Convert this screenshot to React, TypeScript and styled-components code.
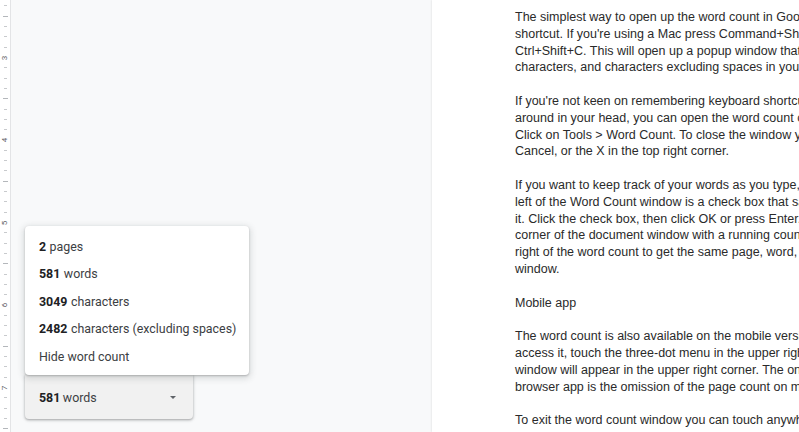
import React from "react";
import styled, { createGlobalStyle } from "styled-components";

const GlobalStyle = createGlobalStyle`
  html, body {
    margin: 0;
    padding: 0;
    width: 799px;
    height: 432px;
    overflow: hidden;
    background: #f8f9fa;
  }
`;

const EIGHTH = 10.3125;

const Shell = styled.div`
  display: flex;
  width: 799px;
  height: 432px;
  overflow: hidden;
`;

const Ruler = styled.div`
  flex: 0 0 10px;
  background: #ffffff;
  border-right: 1px solid #e3e4e6;
  display: flex;
  flex-direction: column;
  padding-top: 0.8px;
  overflow: hidden;
`;

const RulerCell = styled.div`
  flex: 0 0 ${EIGHTH}px;
  display: flex;
  align-items: center;
  justify-content: center;
`;

const Tick = styled.span<{ $long?: boolean }>`
  display: block;
  width: ${(p) => (p.$long ? 5 : 3)}px;
  height: 1px;
  background: ${(p) => (p.$long ? "#b4b7bb" : "#c8cacd")};
`;

const InchLabel = styled.span`
  font-family: Roboto, "Liberation Sans", sans-serif;
  font-size: 8px;
  line-height: 8px;
  color: #5f6368;
  transform: rotate(-90deg);
`;

const Canvas = styled.div`
  flex: 1;
  display: flex;
  background: #f8f9fa;
  overflow: hidden;
`;

const LeftPane = styled.div`
  flex: 0 0 421px;
  display: flex;
  flex-direction: column;
  justify-content: flex-end;
  align-items: flex-start;
  padding: 0 0 13px 14px;
  box-sizing: border-box;
`;

const Popup = styled.div`
  position: relative;
  z-index: 1;
  width: 224px;
  padding: 7px 0 5px;
  background: #ffffff;
  border-radius: 4px;
  box-shadow: 0 1px 2px rgba(60, 64, 67, 0.3), 0 2px 6px 2px rgba(60, 64, 67, 0.15);
`;

const PopupItem = styled.div`
  height: 27.5px;
  display: flex;
  align-items: center;
  padding-left: 14px;
  font-family: Roboto, "Liberation Sans", sans-serif;
  font-size: 12.4px;
  color: #3c4043;
  white-space: nowrap;

  b {
    font-weight: 700;
    color: #202124;
    margin-right: 3.5px;
  }
`;

const CountButton = styled.div`
  width: 168px;
  height: 44px;
  box-sizing: border-box;
  display: flex;
  align-items: center;
  justify-content: space-between;
  padding: 0 17px 0 14px;
  background: #f1f1f1;
  border-radius: 0 0 4px 4px;
  box-shadow: 0 1px 2px rgba(60, 64, 67, 0.3), 0 1px 3px 1px rgba(60, 64, 67, 0.15);
  font-family: Roboto, "Liberation Sans", sans-serif;
  font-size: 12.4px;
  color: #3c4043;

  b {
    font-weight: 700;
    color: #202124;
    margin-right: 2.5px;
  }
`;

const Caret = styled.span`
  width: 0;
  height: 0;
  border-left: 3.5px solid transparent;
  border-right: 3.5px solid transparent;
  border-top: 3.5px solid #5f6368;
`;

const Page = styled.div`
  flex: 0 0 701px;
  background: #ffffff;
  box-shadow: 0 0 2px rgba(60, 64, 67, 0.18);
  padding: 9px 0 0 83px;
  box-sizing: border-box;
  font-family: "Liberation Sans", Arial, sans-serif;
  font-size: 12.5px;
  line-height: 16.8px;
  color: #2a2a2a;
`;

const Paragraph = styled.div`
  margin-bottom: 16.8px;
`;

const Line = styled.div`
  white-space: nowrap;
`;

const paragraphs: string[][] = [
  [
    "The simplest way to open up the word count in Google Docs is with a keyboard",
    "shortcut. If you're using a Mac press Command+Shift+C. On Windows press",
    "Ctrl+Shift+C. This will open up a popup window that shows the number of pages, words,",
    "characters, and characters excluding spaces in your document.",
  ],
  [
    "If you're not keen on remembering keyboard shortcuts or just don't want to keep",
    "around in your head, you can open the word count counter from the menu bar.",
    "Click on Tools > Word Count. To close the window you can click OK, press Enter,",
    "Cancel, or the X in the top right corner.",
  ],
  [
    "If you want to keep track of your words as you type, look at the bottom",
    "left of the Word Count window is a check box that says Display word count while typing",
    "it. Click the check box, then click OK or press Enter. A box will appear in the lower left",
    "corner of the document window with a running count of words. Click the arrow to the",
    "right of the word count to get the same page, word, and character counts as the popup",
    "window.",
  ],
  ["Mobile app"],
  [
    "The word count is also available on the mobile version of Google Docs. To",
    "access it, touch the three-dot menu in the upper right corner, then Word count. The",
    "window will appear in the upper right corner. The only difference from the",
    "browser app is the omission of the page count on mobile.",
  ],
  [
    "To exit the word count window you can touch anywhere on the screen, use the",
    "back button, or touch the arrow at the top left of the window.",
  ],
];

const stats: [string, string][] = [
  ["2", "pages"],
  ["581", "words"],
  ["3049", "characters"],
  ["2482", "characters (excluding spaces)"],
];

function renderRuler() {
  const cells = [];
  for (let i = 0; i < 42; i++) {
    const rel = i - 5;
    const mod = ((rel % 8) + 8) % 8;
    let content;
    if (mod === 0) {
      content = <InchLabel>{3 + rel / 8}</InchLabel>;
    } else {
      content = <Tick $long={mod === 4} />;
    }
    cells.push(<RulerCell key={i}>{content}</RulerCell>);
  }
  return cells;
}

export default function App() {
  return (
    <>
      <GlobalStyle />
      <Shell>
        <Ruler>{renderRuler()}</Ruler>
        <Canvas>
          <LeftPane>
            <Popup>
              {stats.map(([num, label]) => (
                <PopupItem key={label}>
                  <b>{num}</b>
                  {label}
                </PopupItem>
              ))}
              <PopupItem>Hide word count</PopupItem>
            </Popup>
            <CountButton>
              <span>
                <b>581</b>words
              </span>
              <Caret />
            </CountButton>
          </LeftPane>
          <Page>
            {paragraphs.map((lines, idx) => (
              <Paragraph key={idx}>
                {lines.map((line, j) => (
                  <Line key={j}>{line}</Line>
                ))}
              </Paragraph>
            ))}
          </Page>
        </Canvas>
      </Shell>
    </>
  );
}
